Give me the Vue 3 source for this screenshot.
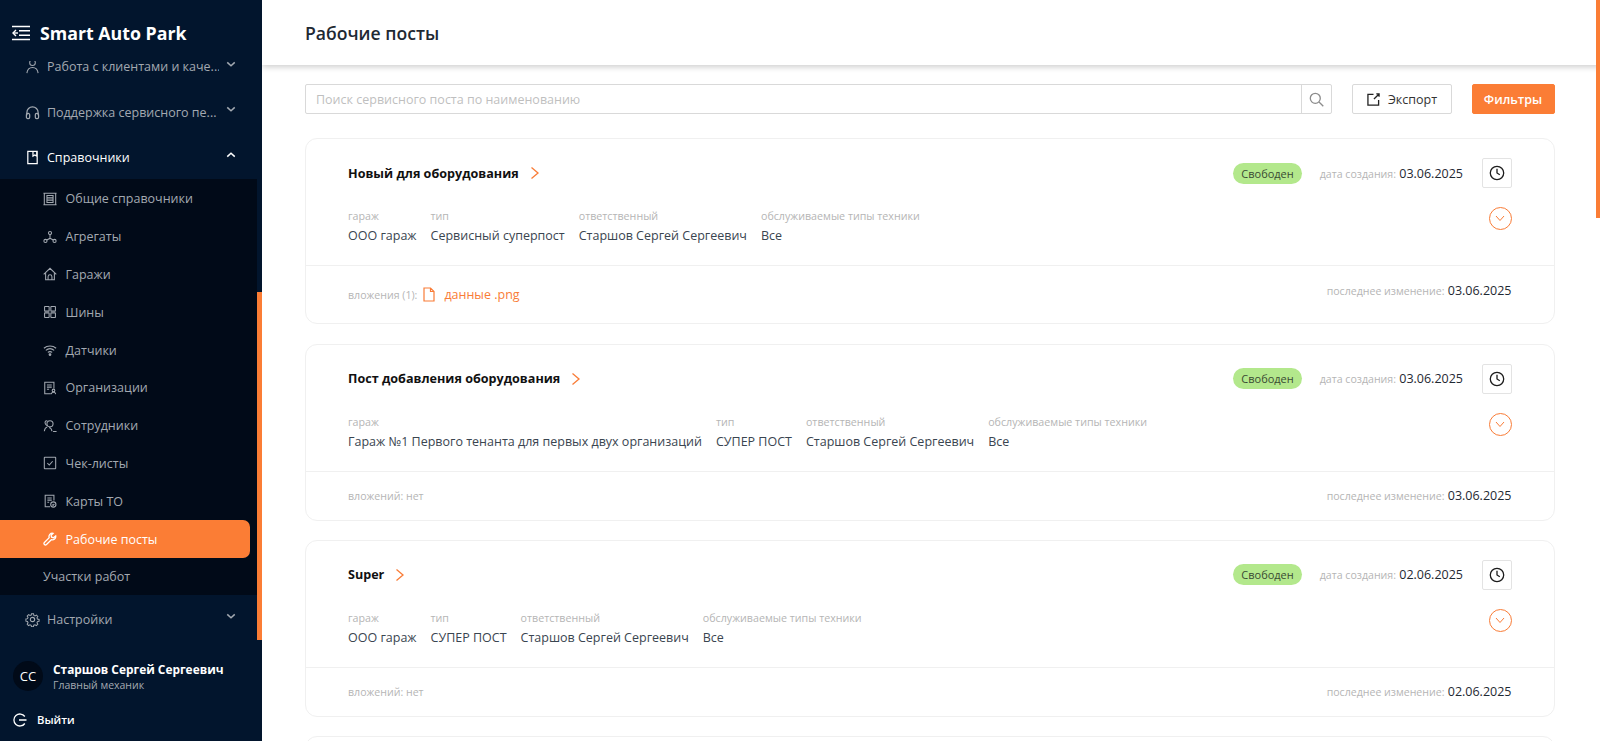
<script setup>
const subItems = [
  { label: 'Общие справочники', icon: 'book' },
  { label: 'Агрегаты', icon: 'nodes' },
  { label: 'Гаражи', icon: 'home' },
  { label: 'Шины', icon: 'grid' },
  { label: 'Датчики', icon: 'wifi' },
  { label: 'Организации', icon: 'org' },
  { label: 'Сотрудники', icon: 'staff' },
  { label: 'Чек-листы', icon: 'check' },
  { label: 'Карты ТО', icon: 'card' },
  { label: 'Рабочие посты', icon: 'wrench', active: true },
  { label: 'Участки работ', icon: '' }
]
const cards = [
  { title: 'Новый для оборудования', created: '03.06.2025', changed: '03.06.2025', garage: 'ООО гараж', type: 'Сервисный суперпост', file: 'данные .png', tall: true },
  { title: 'Пост добавления оборудования', created: '03.06.2025', changed: '03.06.2025', garage: 'Гараж №1 Первого тенанта для первых двух организаций', type: 'СУПЕР ПОСТ' },
  { title: 'Super', created: '02.06.2025', changed: '02.06.2025', garage: 'ООО гараж', type: 'СУПЕР ПОСТ' },
  { title: 'Пост', created: '02.06.2025', changed: '02.06.2025', garage: 'ООО гараж', type: 'СУПЕР ПОСТ' }
]
</script>

<template>
  <div class="app">
    <aside class="sidebar">
      <div class="logo">
        <svg class="logo-icon" width="18" height="16" viewBox="0 0 18 16" fill="none" stroke="#fff" stroke-width="1.6">
          <path d="M0 1.500h18M7 5.800h11M7 10.200h11M0 14.500h18" />
          <path d="M4 5 1 8l3 3" stroke-width="1.4" />
          <path d="M1 8h5" stroke-width="1.4" />
        </svg>
        <span>Smart Auto Park</span>
      </div>
      <nav class="nav">
        <div class="top-item clipped">
          <svg class="ico" viewBox="0 0 16 16" fill="none" stroke="currentColor" stroke-width="1.1"><circle cx="8" cy="4" r="3" /><path d="M2 15c.5-4 3-6 6-6s5.500 2 6 6" /></svg>
          <span class="top-label">Работа с клиентами и каче...</span>
          <svg class="chev" viewBox="0 0 12 8" fill="none" stroke="currentColor" stroke-width="1.8"><path d="m1.500 1.500 4.500 4 4.500-4" /></svg>
        </div>
        <div class="top-item">
          <svg class="ico" viewBox="0 0 16 16" fill="none" stroke="currentColor" stroke-width="1.3"><path d="M2 11V8a6 6 0 0 1 12 0v3" /><rect x="1.500" y="9" width="3.500" height="5.500" rx="1.500" /><rect x="11" y="9" width="3.500" height="5.500" rx="1.500" /></svg>
          <span class="top-label">Поддержка сервисного пе...</span>
          <svg class="chev" viewBox="0 0 12 8" fill="none" stroke="currentColor" stroke-width="1.8"><path d="m1.500 1.500 4.500 4 4.500-4" /></svg>
        </div>
        <div class="top-item open">
          <svg class="ico" viewBox="0 0 16 16" fill="none" stroke="currentColor" stroke-width="1.3"><path d="M3 1.500h10v13H3zM8.500 1.500v5l2-1.300 2 1.300v-5" /></svg>
          <span class="top-label">Справочники</span>
          <svg class="chev" viewBox="0 0 12 8" fill="none" stroke="currentColor" stroke-width="1.8"><path d="m1.500 6.500 4.500-4 4.500 4" /></svg>
        </div>
        <div class="submenu">
          <div v-for="item in subItems" :key="item.label" class="sub-item" :class="{ active: item.active, plain: !item.icon }">
            <svg v-if="item.icon" class="sub-ico" viewBox="0 0 16 16" fill="none" stroke="currentColor" stroke-width="1.2">
              <template v-if="item.icon === 'book'"><path d="M1.500 1.500h13v13h-13zM4.500 4h7v8h-7zM4.500 6.700h7M4.500 9.300h7M.5 1.500h2M13.500 1.500h2M.5 14.500h2M13.500 14.500h2" /></template>
              <template v-else-if="item.icon === 'nodes'"><circle cx="8" cy="3.500" r="1.800" /><circle cx="2.800" cy="12.500" r="1.800" /><circle cx="13.200" cy="12.500" r="1.800" /><path d="M8 5.300V9.500l-3.700 2M8 9.500l3.700 2" /></template>
              <template v-else-if="item.icon === 'home'"><path d="M.8 8.500 8 1.500l7.200 7M3 7v7.500h10V7M5.800 14.500V11a2.200 2.200 0 0 1 4.400 0v3.500" /></template>
              <template v-else-if="item.icon === 'grid'"><rect x="1.800" y="1.800" width="5.200" height="5.200" rx=".4" /><rect x="9" y="1.800" width="5.200" height="5.200" rx=".4" /><rect x="1.800" y="9" width="5.200" height="5.200" rx=".4" /><rect x="9" y="9" width="5.200" height="5.200" rx=".4" /></template>
              <template v-else-if="item.icon === 'wifi'"><path d="M1 6c4-3.500 10-3.500 14 0M3.200 8.400c2.800-2.300 6.800-2.300 9.600 0M5.500 10.800c1.500-1.100 3.500-1.100 5 0" /><circle cx="8" cy="13.200" r="1" fill="currentColor" /></template>
              <template v-else-if="item.icon === 'org'"><path d="M9 14.500H2v-13h10.500v7M4.500 4.500h5.500M4.500 7h5.500M4.500 9.500h2.500" /><circle cx="12" cy="10.800" r="1.500" /><path d="M9.500 15c.2-1.500 1.200-2.200 2.500-2.200s2.300.7 2.500 2.200" /></template>
              <template v-else-if="item.icon === 'staff'"><circle cx="8" cy="5.500" r="3.500" /><path d="M5 2.500C3.500 1 1.800 3 2.500 5c.4 1.200 1 2 2 2.500M1.500 14c.2-2.500 1.500-4.300 3.300-5M7 9.800c1.800.5 3 2 3.200 4.200M11.500 14.300h4" /></template>
              <template v-else-if="item.icon === 'check'"><rect x="1.500" y="1.500" width="13" height="13" rx=".5" /><path d="m5 8.200 2.200 2.200L11 6" /></template>
              <template v-else-if="item.icon === 'card'"><path d="M8 14.500H2.500v-13h10v6M5 4.500h5M5 7h5M5 9.500h2" /><circle cx="11.800" cy="12" r="3" /><path d="m10.500 12 1 1 1.500-1.800" /></template>
              <template v-else><path d="M14.500 4.500a3.800 3.800 0 0 1-5 4.300L4 14.300a1.700 1.700 0 0 1-2.400-2.400l5.500-5.400a3.800 3.800 0 0 1 4.400-5L9.300 3.800l.5 2.200 2.200.5z" stroke-width="1.500" /></template>
            </svg>
            <span>{{ item.label }}</span>
          </div>
        </div>
        <div class="top-item settings">
          <svg class="ico" viewBox="0 0 16 16" fill="none" stroke="currentColor" stroke-width="1.200"><circle cx="8" cy="8" r="2.300" /><path d="m6.800 1.200h2.400l.4 1.900 1.400.6 1.700-1 1.600 1.700-1 1.600.6 1.500 1.900.4v2.200l-1.900.4-.6 1.400 1 1.700-1.700 1.600-1.600-1-1.500.6-.4 1.900H6.800l-.4-1.900-1.400-.6-1.700 1-1.600-1.700 1-1.600-.6-1.500-1.900-.4V7.400l1.900-.4.600-1.400-1-1.700 1.700-1.600 1.600 1 1.500-.6z" transform="translate(.8 .8) scale(.9)" /></svg>
          <span class="top-label">Настройки</span>
          <svg class="chev" viewBox="0 0 12 8" fill="none" stroke="currentColor" stroke-width="1.8"><path d="m1.500 1.500 4.500 4 4.500-4" /></svg>
        </div>
      </nav>
      <div class="user">
        <div class="avatar">СС</div>
        <div class="user-text">
          <div class="user-name">Старшов Сергей Сергеевич</div>
          <div class="user-role">Главный механик</div>
        </div>
      </div>
      <div class="logout">
        <svg width="14" height="14" viewBox="0 0 14 14" fill="none" stroke="#fff" stroke-width="1.300"><path d="M11.800 3.500A6 6 0 1 0 11.800 10.500M6 7h7.500" /></svg>
        <span>Выйти</span>
      </div>
      <div class="side-thumb"></div>
    </aside>

    <main class="main">
      <header class="header"><h1>Рабочие посты</h1></header>
      <div class="content">
        <div class="toolbar">
          <div class="search">
            <div class="search-input">Поиск сервисного поста по наименованию</div>
            <div class="search-btn">
              <svg width="15" height="15" viewBox="0 0 15 15" fill="none" stroke="#8c8c8c" stroke-width="1.300"><circle cx="6.300" cy="6.300" r="5" /><path d="m10 10 4.300 4.300" /></svg>
            </div>
          </div>
          <button class="btn export">
            <svg width="13" height="13" viewBox="0 0 14 14" fill="none" stroke="#222" stroke-width="1.400"><path d="M7 1.500H1v11.500h11.500V7.500M7.500 6.500 13 1M10 1h3v3" /></svg>
            <span>Экспорт</span>
          </button>
          <button class="btn filter">Фильтры</button>
        </div>

        <section v-for="card in cards" :key="card.title" class="card" :class="{ tall: card.tall }">
          <div class="card-body">
            <div class="card-top">
              <div class="card-title">
                <span>{{ card.title }}</span>
                <svg width="10" height="14" viewBox="0 0 10 14" fill="none" stroke="#f97c37" stroke-width="1.300"><path d="m1.500 1.500 6.500 5.500-6.500 5.500" /></svg>
              </div>
              <div class="card-meta">
                <span class="badge">Свободен</span>
                <span class="date"><i>дата создания:</i> {{ card.created }}</span>
                <button class="clock">
                  <svg width="16" height="16" viewBox="0 0 16 16" fill="none" stroke="#1c1c1c" stroke-width="1.300"><circle cx="8" cy="8" r="6.700" /><path d="M8 3.800V8l2.800 1.800" /></svg>
                </button>
              </div>
            </div>
            <div class="card-fields">
              <div class="fields">
                <div class="field"><label>гараж</label><div>{{ card.garage }}</div></div>
                <div class="field"><label>тип</label><div>{{ card.type }}</div></div>
                <div class="field"><label>ответственный</label><div>Старшов Сергей Сергеевич</div></div>
                <div class="field"><label>обслуживаемые типы техники</label><div>Все</div></div>
              </div>
              <div class="round">
                <svg width="10" height="7" viewBox="0 0 10 7" fill="none" stroke="#f97c37" stroke-width="1"><path d="m1 1 4 4.500L9 1" /></svg>
              </div>
            </div>
          </div>
          <div class="card-foot">
            <div class="attach">
              <template v-if="card.file">
                <i>вложения (1):</i>
                <svg width="12" height="15" viewBox="0 0 12 15" fill="none" stroke="#f97c37" stroke-width="1.200"><path d="M1 1h6.500L11 4.500V14H1zM7.500 1v3.500H11" /></svg>
                <span class="file">{{ card.file }}</span>
              </template>
              <i v-else>вложений: нет</i>
            </div>
            <span class="date"><i>последнее изменение:</i> {{ card.changed }}</span>
          </div>
        </section>
      </div>
      <div class="main-thumb"></div>
    </main>
  </div>
</template>

<style scoped>
.app {
  display: flex;
  width: 1600px;
  height: 741px;
  overflow: hidden;
  font-family: "Open Sans", "Noto Sans", sans-serif;
  background: #fff;
  color: #1f2933;
}
.sidebar {
  position: relative;
  flex: none;
  width: 262px;
  height: 741px;
  display: flex;
  flex-direction: column;
  background: #02152d;
}
.logo {
  position: relative;
  z-index: 1;
  flex: none;
  height: 61px;
  padding: 24px 0 0 12px;
  box-sizing: border-box;
  display: flex;
  align-items: flex-start;
  gap: 10px;
  background: #02152d;
  color: #fff;
  font-size: 17.750px;
  font-weight: 700;
  line-height: 18px;
  white-space: nowrap;
}
.logo-icon { margin-top: 1px; }
.nav {
  flex: none;
  height: 583px;
  overflow: hidden;
}
.top-item {
  display: flex;
  align-items: center;
  width: 257px;
  height: 46px;
  box-sizing: border-box;
  padding: 0 21px 0 25px;
  color: #a3a9b1;
  font-size: 12.500px;
  gap: 7px;
}
.top-item.clipped { margin-top: -17px; height: 45px; }
.top-item.open { color: #fff; height: 44px; }
.top-item.settings { height: 48px; }
.top-label {
  flex: 1;
  white-space: nowrap;
  overflow: hidden;
}
.ico { width: 15px; height: 15px; flex: none; }
.chev { width: 10px; height: 7px; flex: none; margin-bottom: 5px; }
.submenu {
  width: 257px;
  height: 416px;
  box-sizing: border-box;
  padding-top: 1px;
  background: #010a18;
}
.sub-item {
  height: 37.800px;
  box-sizing: border-box;
  padding-left: 43px;
  display: flex;
  align-items: center;
  gap: 8.500px;
  color: #a3a9b1;
  font-size: 12.500px;
}
.sub-item.active {
  width: 250px;
  color: #fff;
  background: #fb7d35;
  border-radius: 0 7px 7px 0;
}
.sub-ico { width: 14px; height: 14px; flex: none; }
.user {
  flex: none;
  display: flex;
  align-items: center;
  gap: 10px;
  padding: 14px 0 0 13px;
  height: 50px;
  box-sizing: border-box;
}
.avatar {
  width: 30px;
  height: 30px;
  border-radius: 50%;
  background: #010a18;
  color: #fff;
  font-size: 13px;
  display: flex;
  align-items: center;
  justify-content: center;
}
.user-name {
  color: #fff;
  font-size: 11.900px;
  font-weight: 700;
  line-height: 18px;
  white-space: nowrap;
}
.user-role {
  color: #a3a9b1;
  font-size: 10.500px;
  line-height: 15px;
}
.logout {
  flex: none;
  display: flex;
  align-items: center;
  gap: 10px;
  padding: 18px 0 0 13px;
  color: #fff;
  font-size: 11.300px;
  font-weight: 600;
}
.side-thumb {
  position: absolute;
  top: 292px;
  right: 0;
  width: 5px;
  height: 348px;
  background: #fb7d35;
}
.main {
  position: relative;
  flex: 1;
  min-width: 0;
  height: 741px;
  overflow: hidden;
  background: #fff;
}
.header {
  height: 65px;
  display: flex;
  align-items: center;
  padding-left: 43px;
  background: #fff;
  box-shadow: 0 2px 6px rgba(0, 0, 0, 0.2);
  position: relative;
}
h1 {
  margin: 0;
  font-size: 17.600px;
  font-weight: 600;
  color: #1f2933;
}
.content { padding: 19px 45.500px 0 43px; }
.toolbar {
  display: flex;
  align-items: stretch;
  height: 30px;
  margin-bottom: 24px;
}
.search {
  flex: 1;
  display: flex;
  border: 1px solid #d9d9d9;
  border-radius: 2px;
  box-sizing: border-box;
}
.search-input {
  flex: 1;
  padding-left: 10px;
  line-height: 30px;
  height: 28px;
  color: #bfbfbf;
  font-size: 12.500px;
}
.search-btn {
  width: 29px;
  border-left: 1px solid #d9d9d9;
  display: flex;
  align-items: center;
  justify-content: center;
}
.btn {
  font-family: inherit;
  font-size: 12.500px;
  border-radius: 2px;
  box-sizing: border-box;
  cursor: pointer;
}
.export {
  width: 100px;
  margin-left: 20px;
  background: #fff;
  border: 1px solid #d9d9d9;
  color: #333;
  display: flex;
  align-items: center;
  justify-content: center;
  gap: 8px;
}
.filter {
  width: 83px;
  margin-left: 19.500px;
  background: #fb7d35;
  border: 1px solid #fb7d35;
  color: #fff;
  font-weight: 600;
}
.card {
  height: 177px;
  margin-bottom: 19px;
  box-sizing: border-box;
  border: 1px solid #f0f0f0;
  border-radius: 12px;
  background: #fff;
}
.card.tall { height: 186px; margin-bottom: 19.500px; }
.card-body {
  height: 127px;
  box-sizing: border-box;
  padding: 19px 42px 0 42px;
  border-bottom: 1px solid #f0f0f0;
}
.card-top {
  display: flex;
  justify-content: space-between;
  align-items: center;
  height: 30px;
}
.card-title {
  display: flex;
  align-items: center;
  gap: 11px;
  font-size: 12.600px;
  font-weight: 700;
  color: #111;
}
.card-meta {
  display: flex;
  align-items: center;
}
.badge {
  background: #b3e88c;
  color: #3a4a33;
  font-size: 11px;
  height: 21px;
  line-height: 21px;
  padding: 0 8px;
  border-radius: 11px;
}
.date {
  font-size: 12.500px;
  color: #1f2933;
}
.date i, .attach i {
  font-style: normal;
  font-size: 10.600px;
  color: #b5b5b5;
}
.card-meta .date { margin-left: 18px; }
.clock {
  width: 30px;
  height: 30px;
  margin-left: 18.500px;
  padding: 0;
  background: #fff;
  border: 1px solid #e3e3e3;
  border-radius: 2px;
  display: flex;
  align-items: center;
  justify-content: center;
}
.card-fields {
  display: flex;
  justify-content: space-between;
  align-items: flex-start;
  margin-top: 19px;
}
.fields { display: flex; gap: 14px; }
.field {
  font-size: 12.500px;
  color: #3a4550;
  line-height: 19px;
  white-space: nowrap;
}
.field label {
  display: block;
  font-size: 10.700px;
  color: #b5b5b5;
}
.round {
  width: 23px;
  height: 23px;
  box-sizing: border-box;
  border: 1px solid #f97c37;
  border-radius: 50%;
  display: flex;
  align-items: center;
  justify-content: center;
}
.card-foot {
  height: 48px;
  padding: 0 42px;
  display: flex;
  justify-content: space-between;
  align-items: center;
}
.tall .card-foot { height: 57px; }
.tall .card-foot .date { margin-bottom: 8px; }
.attach {
  display: flex;
  align-items: center;
  gap: 6px;
}
.file {
  margin-left: 3px;
  font-size: 12.500px;
  color: #f97c37;
}
.main-thumb {
  position: absolute;
  top: 0;
  right: 0;
  width: 4px;
  height: 218px;
  background: #fb7d35;
}
</style>
